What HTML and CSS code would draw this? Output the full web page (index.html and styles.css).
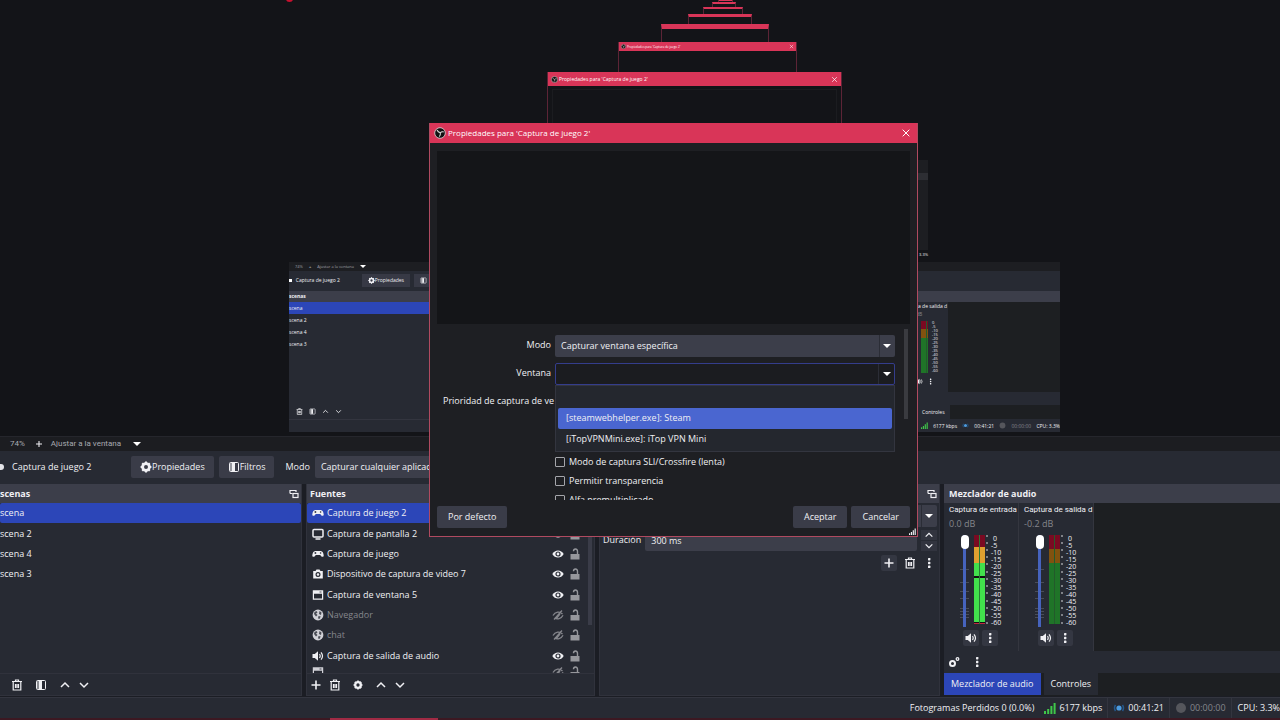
FILE: index.html
```html
<!DOCTYPE html>
<html lang="es">
<head>
  <meta charset="UTF-8" />
  <meta name="viewport" content="width=device-width, initial-scale=1.0" />
  <title>OBS Studio</title>
  <link rel="stylesheet" href="styles.css">
</head>
<body>

  <svg class="sprite" aria-hidden="true">
    <symbol id="i-trash" viewBox="0 0 12 12"><path d="M1 2.500h10M4.500 2V1h3v1M2.200 3v8h7.600V3M4.500 5v4M6 5v4M7.500 5v4" fill="none" stroke="currentColor" stroke-width="1.200"/></symbol>
    <symbol id="i-plus" viewBox="0 0 12 12"><path d="M6 1.500v9M1.500 6h9" stroke="currentColor" stroke-width="1.600"/></symbol>
    <symbol id="i-filter" viewBox="0 0 12 12"><rect x="1.500" y="1.500" width="9" height="9" rx="1" fill="none" stroke="currentColor"/><path d="M2 2h3v8H2z" fill="currentColor" opacity=".5"/><path d="M4 2h3v8H4z" fill="currentColor"/></symbol>
    <symbol id="i-up" viewBox="0 0 12 12"><path d="M2 8l4-4 4 4" fill="none" stroke="currentColor" stroke-width="1.500"/></symbol>
    <symbol id="i-down" viewBox="0 0 12 12"><path d="M2 4l4 4 4-4" fill="none" stroke="currentColor" stroke-width="1.500"/></symbol>
    <symbol id="i-gear" viewBox="0 0 12 12"><circle cx="6" cy="6" r="3.400" fill="none" stroke="currentColor" stroke-width="2.800"/><path d="M6 .6v10.800M.6 6h10.800M2.200 2.200l7.600 7.600M9.800 2.200L2.200 9.800" stroke="currentColor" stroke-width="2" stroke-dasharray="2 6.800"/></symbol>
    <symbol id="i-gears" viewBox="0 0 12 12"><circle cx="4.500" cy="7.500" r="2.500" fill="none" stroke="currentColor" stroke-width="2"/><circle cx="9.500" cy="3" r="1.300" fill="none" stroke="currentColor" stroke-width="1.300"/></symbol>
    <symbol id="i-dots" viewBox="0 0 12 12"><g fill="currentColor"><rect x="5" y="1" width="2.400" height="2.400" rx=".6"/><rect x="5" y="4.800" width="2.400" height="2.400" rx=".6"/><rect x="5" y="8.600" width="2.400" height="2.400" rx=".6"/></g></symbol>
    <symbol id="i-float" viewBox="0 0 12 12"><path d="M2 5.500V2.500h6V4" fill="none" stroke="currentColor" stroke-width="1.200"/><path d="M2 5.500h2.500" stroke="currentColor"/><rect x="5" y="5.500" width="5" height="4" fill="none" stroke="currentColor" stroke-width="1.200"/></symbol>
    <symbol id="i-pad" viewBox="0 0 12 12"><path d="M3.200 3h5.600c1.700 0 2.700 2.200 2.900 4.400.1 1.600-1.600 1.900-2.500.8L8.200 7H3.800l-1 1.200C1.900 9.300.2 9 .3 7.400.500 5.200 1.500 3 3.200 3z" fill="currentColor"/><path d="M3.400 4v2M2.400 5h2" stroke="#272a33" stroke-width=".8"/><circle cx="8.600" cy="5" r=".8" fill="#272a33"/></symbol>
    <symbol id="i-screen" viewBox="0 0 12 12"><rect x="1" y="1.500" width="10" height="7.500" rx="1" fill="none" stroke="currentColor" stroke-width="1.500"/><path d="M3.500 11h5" stroke="currentColor" stroke-width="1.500"/></symbol>
    <symbol id="i-camera" viewBox="0 0 12 12"><path d="M1.200 3h2.300l1-1.500h3L8.500 3h2.300v7.500H1.200z" fill="currentColor"/><circle cx="6" cy="6.500" r="1.900" fill="none" stroke="#272a33" stroke-width="1.200"/></symbol>
    <symbol id="i-window" viewBox="0 0 12 12"><path d="M.8 1.200h10.400v9.600H.8zM2 4.800v4.800h8V4.800z" fill="currentColor" fill-rule="evenodd"/><path d="M7.500 3h2" stroke="#272a33" stroke-width=".8"/></symbol>
    <symbol id="i-globe" viewBox="0 0 12 12"><circle cx="6" cy="6" r="5.400" fill="currentColor"/><path d="M2.500 3l2-1 1 1.500-1.500 1L5.500 6 4 7.500 2 5zM7.500 2l2 1.500L9 6 7 5zM6 7.500L8.500 7 8 9.500 6.500 10z" fill="#272a33" opacity=".8"/></symbol>
    <symbol id="i-sound" viewBox="0 0 12 12"><path d="M.5 4h2.300L6 1.200v9.600L2.800 8H.5z" fill="currentColor"/><path d="M7.500 4q1.400 2 0 4M9 2.300q3 3.700 0 7.400" fill="none" stroke="currentColor" stroke-width="1.200"/></symbol>
    <symbol id="i-eye" viewBox="0 0 12 12"><path d="M.3 6C2.800 1.200 9.200 1.200 11.700 6 9.200 10.800 2.800 10.800.3 6z" fill="currentColor"/><circle cx="6" cy="6" r="2" fill="none" stroke="#272a33" stroke-width="1.200"/></symbol>
    <symbol id="i-hidden" viewBox="0 0 12 12"><path d="M1 6.500C3 2.700 8 2 10.500 5.200M2.500 9c3 1.800 6.500 1 8.500-2.800M2 10.500l8-9M4 10l4-5" fill="none" stroke="currentColor" stroke-width="1.300"/></symbol>
    <symbol id="i-lock" viewBox="0 0 12 12"><path d="M1.500 6h9v5.500h-9z" fill="currentColor"/><path d="M8.500 6V3.200c0-3-4-3-4 0" fill="none" stroke="currentColor" stroke-width="1.400"/></symbol>
    <symbol id="i-close" viewBox="0 0 12 12"><path d="M2 2l8 8M10 2l-8 8" stroke="currentColor" stroke-width="1.200"/></symbol>
    <symbol id="i-obs" viewBox="0 0 12 12"><circle cx="6" cy="6" r="5.300" fill="#111" stroke="#ddd" stroke-width=".8"/><path d="M3 3c1 2.200 2.200 2.500 3.300 2.800M9.800 5C8 4.300 7 5 6.300 5.800M5.200 9.600C6.500 8.500 6.500 7 6.300 5.800" fill="none" stroke="#ddd" stroke-width="1.100"/></symbol>
    <symbol id="i-bars" viewBox="0 0 12 12"><path d="M0 9h2v3H0zM3.200 7h2v5h-2zM6.400 4h2v8h-2zM9.600 1h2v11h-2z" fill="currentColor"/></symbol>
    <symbol id="i-live" viewBox="0 0 12 12"><circle cx="6" cy="6" r="2.600" fill="#4b9be0"/><path d="M2.500 3q-2 3 0 6M9.500 3q2 3 0 6" fill="none" stroke="#24588c" stroke-width="1.500"/></symbol>
    <symbol id="i-dot" viewBox="0 0 12 12"><circle cx="6" cy="6" r="5" fill="#55565c"/></symbol>
    <!-- fader marks -->
    <symbol id="i-marks" viewBox="0 0 9 91"><path d="M0 34h9M0 47h9M0 56h9M0 63h9M0 73h9M0 76h9M0 79h9M0 82h9" stroke="#4a4d58"/></symbol>
    <symbol id="i-ticks" viewBox="0 0 3 91"><path d="M0 1h2M0 8h2M0 15h2M0 22h2M0 29h2M0 37h2M0 44h2M0 51h2M0 58h2M0 66h2M0 73h2M0 80h2M0 88h2" stroke="#d8d8dc"/></symbol>
  </svg>

  <main class="preview">
    <span class="rec-dot"></span>

    <div class="ghost g7"></div>
    <div class="ghost g6"></div>
    <div class="ghost g5"></div>
    <div class="ghost g4"></div>
    <div class="ghost g3"></div>
    <div class="ghost g2"><div class="ghost-bar"><svg><use href="#i-obs"/></svg><span>Propiedades para 'Captura de juego 2'</span><svg><use href="#i-close"/></svg></div></div>
    <div class="ghost g1"><div class="ghost-bar"><svg><use href="#i-obs"/></svg><span>Propiedades para 'Captura de juego 2'</span><svg><use href="#i-close"/></svg></div><div class="ghost-view"></div></div>
    <div class="sliver"><i></i><span>3.3%</span></div>

    <div class="mirror">
      <div class="mirror-left">
        <div class="m-zoom"><span>74%</span><b>+</b><span>Ajustar a la ventana</span><i class="caret"></i></div>
        <div class="m-context"><i class="m-cut"></i><span>Captura de juego 2</span><span class="m-btn"><svg><use href="#i-gear"/></svg>Propiedades</span><span class="m-btn"><svg><use href="#i-filter"/></svg></span></div>
        <div class="m-head">scenas</div>
        <div class="m-row active">scena</div>
        <div class="m-row">scena 2</div>
        <div class="m-row">scena 4</div>
        <div class="m-row">scena 3</div>
        <div class="m-tools"><svg><use href="#i-trash"/></svg><svg><use href="#i-filter"/></svg><svg><use href="#i-up"/></svg><svg><use href="#i-down"/></svg></div>
        <div class="m-status"></div>
      </div>
      <div class="mirror-right">
        <div class="m-zoom"></div>
        <div class="m-context"></div>
        <div class="m-head"></div>
        <div class="m-mixer">
          <div class="m-channel">
            <span>ra de salida d</span>
            <em>dB</em>
            <div class="m-levels"><div class="meter dim"></div><div class="m-scale"><span>0</span><span>-5</span><span>-10</span><span>-15</span><span>-20</span><span>-25</span><span>-30</span><span>-35</span><span>-40</span><span>-45</span><span>-50</span><span>-55</span><span>-60</span></div></div>
            <div class="m-icons"><svg><use href="#i-sound"/></svg><svg><use href="#i-dots"/></svg></div>
          </div>
        </div>
        <div class="m-gap"></div>
        <div class="m-tabs"><span>Controles</span></div>
        <div class="m-status"><svg class="green"><use href="#i-bars"/></svg><span>6177 kbps</span><svg><use href="#i-live"/></svg><span>00:41:21</span><svg><use href="#i-dot"/></svg><span class="off">00:00:00</span><span>CPU: 3.3%</span></div>
      </div>
    </div>
  </main>

  <div class="zoombar">
    <span>74%</span>
    <button class="icon-btn" aria-label="Acercar"><svg class="icon"><use href="#i-plus"/></svg></button>
    <button class="zoom-mode">Ajustar a la ventana <i class="caret"></i></button>
  </div>

  <div class="context">
    <i class="cut-icon"></i>
    <span class="context-name">Captura de juego 2</span>
    <button class="btn"><svg class="icon"><use href="#i-gear"/></svg>Propiedades</button>
    <button class="btn"><svg class="icon"><use href="#i-filter"/></svg>Filtros</button>
    <label for="capMode">Modo</label>
    <select id="capMode" class="field"><option>Capturar cualquier aplicación en pantalla completa</option></select>
  </div>

  <div class="docks">
    <section class="dock scenes-dock">
      <h2>scenas <svg class="icon"><use href="#i-float"/></svg></h2>
      <ul class="list">
        <li class="active">scena</li>
        <li>scena 2</li>
        <li>scena 4</li>
        <li>scena 3</li>
      </ul>
      <div class="tools">
        <button class="icon-btn" aria-label="Eliminar escena"><svg class="icon"><use href="#i-trash"/></svg></button>
        <button class="icon-btn spaced" aria-label="Filtros de escena"><svg class="icon"><use href="#i-filter"/></svg></button>
        <button class="icon-btn" aria-label="Subir escena"><svg class="icon"><use href="#i-up"/></svg></button>
        <button class="icon-btn" aria-label="Bajar escena"><svg class="icon"><use href="#i-down"/></svg></button>
      </div>
    </section>

    <section class="dock">
      <h2>Fuentes</h2>
      <ul class="list sources">
        <li class="active"><svg class="icon"><use href="#i-pad"/></svg><span>Captura de juego 2</span><svg class="icon"><use href="#i-eye"/></svg><svg class="icon lock"><use href="#i-lock"/></svg></li>
        <li><svg class="icon"><use href="#i-screen"/></svg><span>Captura de pantalla 2</span><svg class="icon"><use href="#i-eye"/></svg><svg class="icon lock"><use href="#i-lock"/></svg></li>
        <li><svg class="icon"><use href="#i-pad"/></svg><span>Captura de juego</span><svg class="icon"><use href="#i-eye"/></svg><svg class="icon lock"><use href="#i-lock"/></svg></li>
        <li><svg class="icon"><use href="#i-camera"/></svg><span>Dispositivo de captura de video 7</span><svg class="icon"><use href="#i-eye"/></svg><svg class="icon lock"><use href="#i-lock"/></svg></li>
        <li><svg class="icon"><use href="#i-window"/></svg><span>Captura de ventana 5</span><svg class="icon"><use href="#i-eye"/></svg><svg class="icon lock"><use href="#i-lock"/></svg></li>
        <li class="off"><svg class="icon"><use href="#i-globe"/></svg><span>Navegador</span><svg class="icon dimmed"><use href="#i-hidden"/></svg><svg class="icon lock"><use href="#i-lock"/></svg></li>
        <li class="off"><svg class="icon"><use href="#i-globe"/></svg><span>chat</span><svg class="icon dimmed"><use href="#i-hidden"/></svg><svg class="icon lock"><use href="#i-lock"/></svg></li>
        <li><svg class="icon"><use href="#i-sound"/></svg><span>Captura de salida de audio</span><svg class="icon"><use href="#i-eye"/></svg><svg class="icon lock"><use href="#i-lock"/></svg></li>
        <li class="off"><svg class="icon"><use href="#i-window"/></svg><span></span><svg class="icon dimmed"><use href="#i-hidden"/></svg><svg class="icon lock"><use href="#i-lock"/></svg></li>
      </ul>
      <div class="tools">
        <button class="icon-btn" aria-label="Agregar fuente"><svg class="icon"><use href="#i-plus"/></svg></button>
        <button class="icon-btn" aria-label="Eliminar fuente"><svg class="icon"><use href="#i-trash"/></svg></button>
        <button class="icon-btn spaced" aria-label="Propiedades de fuente"><svg class="icon small"><use href="#i-gear"/></svg></button>
        <button class="icon-btn" aria-label="Subir fuente"><svg class="icon"><use href="#i-up"/></svg></button>
        <button class="icon-btn" aria-label="Bajar fuente"><svg class="icon"><use href="#i-down"/></svg></button>
      </div>
    </section>

    <section class="dock">
      <h2><span></span><svg class="icon"><use href="#i-float"/></svg></h2>
      <div class="transitions">
        <div class="combo"><select class="field" aria-label="Transición"><option></option></select><i class="caret"></i></div>
        <div class="duration">
          <label for="duration">Duración</label>
          <input id="duration" class="field" type="text" value="300 ms">
          <div class="spin">
            <button class="icon-btn" aria-label="Más"><svg class="icon small"><use href="#i-up"/></svg></button>
            <button class="icon-btn" aria-label="Menos"><svg class="icon small"><use href="#i-down"/></svg></button>
          </div>
        </div>
        <div class="transition-tools">
          <button class="icon-btn raised" aria-label="Agregar transición"><svg class="icon"><use href="#i-plus"/></svg></button>
          <button class="icon-btn" aria-label="Eliminar transición"><svg class="icon"><use href="#i-trash"/></svg></button>
          <button class="icon-btn" aria-label="Opciones de transición"><svg class="icon"><use href="#i-dots"/></svg></button>
        </div>
      </div>
    </section>

    <section class="dock mixer">
      <h2>Mezclador de audio</h2>
      <div class="channels">
        <div class="channel">
          <label for="vol1">Captura de entrada</label>
          <output>0.0 dB</output>
          <div class="levels">
            <div class="fader"><svg><use href="#i-marks"/></svg><input id="vol1" type="range" value="100"></div>
            <div class="meter live"></div>
            <svg class="ticks"><use href="#i-ticks"/></svg>
            <div class="scale"><span>0</span><span>-5</span><span>-10</span><span>-15</span><span>-20</span><span>-25</span><span>-30</span><span>-35</span><span>-40</span><span>-45</span><span>-50</span><span>-55</span><span>-60</span></div>
          </div>
          <div class="channel-btns">
            <button class="icon-btn raised" aria-label="Silenciar"><svg class="icon"><use href="#i-sound"/></svg></button>
            <button class="icon-btn raised" aria-label="Opciones"><svg class="icon"><use href="#i-dots"/></svg></button>
          </div>
        </div>
        <div class="channel">
          <label for="vol2">Captura de salida d</label>
          <output>-0.2 dB</output>
          <div class="levels">
            <div class="fader"><svg><use href="#i-marks"/></svg><input id="vol2" type="range" value="100"></div>
            <div class="meter dim"></div>
            <svg class="ticks"><use href="#i-ticks"/></svg>
            <div class="scale"><span>0</span><span>-5</span><span>-10</span><span>-15</span><span>-20</span><span>-25</span><span>-30</span><span>-35</span><span>-40</span><span>-45</span><span>-50</span><span>-55</span><span>-60</span></div>
          </div>
          <div class="channel-btns">
            <button class="icon-btn raised" aria-label="Silenciar"><svg class="icon"><use href="#i-sound"/></svg></button>
            <button class="icon-btn raised" aria-label="Opciones"><svg class="icon"><use href="#i-dots"/></svg></button>
          </div>
        </div>
      </div>
      <div class="mixer-tools">
        <button class="icon-btn" aria-label="Propiedades avanzadas de audio"><svg class="icon"><use href="#i-gears"/></svg></button>
        <button class="icon-btn" aria-label="Menú del mezclador"><svg class="icon"><use href="#i-dots"/></svg></button>
      </div>
      <div class="tabs">
        <button class="tab active">Mezclador de audio</button>
        <button class="tab">Controles</button>
      </div>
    </section>
  </div>

  <footer class="status">
    <span class="cell">Fotogramas Perdidos 0 (0.0%)</span>
    <span class="cell"><svg class="icon green"><use href="#i-bars"/></svg>6177 kbps</span>
    <span class="cell line"><svg class="icon"><use href="#i-live"/></svg>00:41:21</span>
    <span class="cell line off"><svg class="icon"><use href="#i-dot"/></svg>00:00:00</span>
    <span class="cell line cpu">CPU: 3.3%</span>
  </footer>
  <div class="progress"><span></span></div>

  <div class="dialog" role="dialog" aria-labelledby="dialogTitle">
    <div class="titlebar">
      <svg class="icon"><use href="#i-obs"/></svg>
      <span id="dialogTitle">Propiedades para 'Captura de juego 2'</span>
      <button class="icon-btn" aria-label="Cerrar"><svg class="icon small"><use href="#i-close"/></svg></button>
    </div>
    <div class="dialog-body">
      <div class="dialog-view"></div>
      <div class="form">
        <div class="form-rows">
          <label for="mode">Modo</label>
          <div class="combo"><select id="mode" class="field"><option>Capturar ventana específica</option></select><i class="caret"></i></div>
          <label for="win">Ventana</label>
          <div class="combo open">
            <select id="win" class="field"><option></option></select><i class="caret"></i>
            <ul class="popup" role="listbox">
              <li role="option"></li>
              <li role="option" class="active">[steamwebhelper.exe]: Steam</li>
              <li role="option">[iTopVPNMini.exe]: iTop VPN Mini</li>
            </ul>
          </div>
          <label for="prio">Prioridad de captura de ve</label>
          <div class="combo"><select id="prio" class="field"><option></option></select><i class="caret"></i></div>
          <div class="checks">
            <label><input type="checkbox">Modo de captura SLI/Crossfire (lenta)</label>
            <label><input type="checkbox">Permitir transparencia</label>
            <label><input type="checkbox">Alfa premultiplicado</label>
          </div>
        </div>
        <div class="scroll"></div>
      </div>
      <div class="dialog-foot">
        <button class="btn">Por defecto</button>
        <button class="btn">Aceptar</button>
        <button class="btn">Cancelar</button>
      </div>
    </div>
    <svg class="grip"><use href="#i-bars"/></svg>
    <svg class="cursor" viewBox="0 0 10 14"><path d="M1 1v10l2.500-2 1.500 3.500 2-1L5.500 8H9z" fill="#fff" stroke="#333" stroke-width=".6"/></svg>
  </div>

</body>
</html>
```
FILE: styles.css
```css
* {
  box-sizing: border-box;
}

html, body {
  height: 100%;
  margin: 0;
}

body {
  display: flex;
  flex-direction: column;
  position: relative;
  overflow: hidden;
  font-family: "Open Sans", "Noto Sans", sans-serif;
  font-size: 9px;
  line-height: 14px;
  color: #f0f0f4;
  background-color: #1b1d24;
}

button, input, select {
  font: inherit;
  color: inherit;
}

button {
  border: none;
  padding: 0;
  background: none;
}

ul {
  list-style: none;
  margin: 0;
  padding: 0;
}

.sprite {
  display: none;
}

.icon {
  width: 12px;
  height: 12px;
  flex-shrink: 0;
  display: block;
}

.icon.small {
  width: 10px;
  height: 10px;
}

.icon-btn {
  display: flex;
  align-items: center;
  justify-content: center;
}

.raised {
  width: 16px;
  height: 16px;
  border-radius: 2px;
  background-color: #343742;
}

.green {
  color: #3fc84a;
}

.off {
  color: #85868c;
}

.caret {
  width: 0;
  height: 0;
  border: 4px solid transparent;
  border-top-color: #fff;
  border-bottom: none;
}

.btn {
  display: flex;
  align-items: center;
  justify-content: center;
  height: 22px;
  border-radius: 2px;
  background-color: #3a3c48;
}

.field {
  appearance: none;
  height: 22px;
  border: none;
  border-radius: 2px;
  padding: 0 6px;
  background-color: #3c3e4a;
}

/* preview */
.preview {
  flex: 1;
  min-height: 0;
  position: relative;
  overflow: hidden;
  background-color: #131418;
  border-bottom: 1px solid #25262c;
}

.rec-dot {
  position: absolute;
  left: 286px;
  top: -4px;
  width: 7px;
  height: 6px;
  border-radius: 50%;
  background-color: #c8102e;
}

/* repeated windows inside the capture */
.ghost {
  position: absolute;
  border: 1px solid #5c2436;
  border-top: 3px solid #d93558;
  background-color: #131418;
}

.g7 { left: 718px; top: -2px; width: 15px; height: 6px; }
.g6 { left: 712px; top: 2px; width: 24px; height: 8px; border-top-width: 2px; }
.g5 { left: 703px; top: 7px; width: 40px; height: 8px; border-top-width: 2px; }
.g4 { left: 688px; top: 14px; width: 64px; height: 12px; }
.g3 { left: 661px; top: 24px; width: 108px; height: 20px; border-top-width: 5px; }

.g2 { left: 618px; top: 42px; width: 179px; height: 32px; border-top: none; font-size: 3px; }
.g1 { left: 547px; top: 72px; width: 295px; height: 60px; border-top: none; font-size: 5px; }

.ghost-bar {
  display: flex;
  align-items: center;
  gap: 1px;
  height: 9px;
  padding: 0 2px;
  line-height: 8px;
  color: #fff;
  background-color: #d93558;
}

.ghost-bar span {
  flex: 1;
}

.ghost-bar svg {
  width: 5px;
  height: 5px;
}

.g1 .ghost-bar {
  height: 14px;
  padding: 0 3px;
}

.g1 .ghost-bar svg {
  width: 7px;
  height: 7px;
}

.ghost-view {
  height: 60px;
  margin: 3px 4px;
  border: 1px solid #1b1c20;
}

.sliver {
  position: absolute;
  left: 900px;
  top: 160px;
  width: 28px;
  height: 100px;
  padding-top: 13px;
  background: linear-gradient(#1d1e22 90px, transparent 90px);
  font-size: 4px;
  line-height: 6px;
  text-align: right;
}

.sliver i {
  display: block;
  height: 7px;
  margin-bottom: 72px;
  background-color: #2d2e33;
}

.mirror {
  position: absolute;
  left: 289px;
  top: 262px;
  width: 771px;
  height: 170px;
  display: flex;
  justify-content: space-between;
  background-color: #272a33;
  font-size: 5px;
  line-height: 8px;
}

.mirror svg {
  width: 7px;
  height: 7px;
}

.mirror-left, .mirror-right {
  display: flex;
  flex-direction: column;
  width: 144px;
  overflow: hidden;
}

.m-zoom {
  display: flex;
  align-items: center;
  gap: 6px;
  height: 9px;
  padding-left: 6px;
  font-size: 4px;
  color: #a0a1a8;
  background-color: #1d1e22;
}

.m-zoom .caret {
  border-width: 3px;
  border-bottom: none;
}

.m-context {
  display: flex;
  align-items: center;
  gap: 4px;
  height: 20px;
  padding-bottom: 2px;
  white-space: nowrap;
}

.m-cut {
  width: 3px;
  height: 3px;
  background-color: #fff;
}

.m-context > span:nth-child(2) {
  width: 68px;
}

.m-btn {
  display: flex;
  align-items: center;
  height: 13px;
  padding: 0 6px;
  background-color: #373945;
}

.m-head {
  height: 11px;
  font-weight: bold;
  line-height: 11px;
  background-color: #3c3e4a;
}

.m-row {
  height: 12px;
  line-height: 12px;
}

.m-row.active {
  background-color: #2c46b8;
}

.m-tools {
  display: flex;
  align-items: center;
  gap: 6px;
  flex: 1;
  padding: 54px 0 0 7px;
}

.mirror-left .m-status {
  border-top: 1px solid #33353f;
}

.m-mixer {
  flex: 1;
  padding-right: 112px;
  background: linear-gradient(90deg, #272a33 32px, #1d1f22 32px);
}

.m-channel {
  display: flex;
  flex-direction: column;
  white-space: nowrap;
}

.m-channel em {
  font-style: normal;
  color: #85868c;
}

.m-levels {
  display: flex;
  gap: 4px;
  padding: 3px 0 5px 5px;
}

.m-scale {
  display: flex;
  flex-direction: column;
  font-size: 4px;
  line-height: 4px;
}

.m-icons {
  display: flex;
  gap: 4px;
}

.m-gap {
  height: 13px;
}

.m-tabs {
  height: 14px;
  line-height: 14px;
  background: linear-gradient(90deg, #272a33 34px, #1d1f22 34px);
}

.m-tabs span {
  padding-left: 6px;
}

.m-status {
  display: flex;
  align-items: center;
  justify-content: space-between;
  gap: 1px;
  height: 13px;
  padding-left: 5px;
  white-space: nowrap;
}

/* toolbars */
.zoombar {
  display: flex;
  align-items: center;
  height: 14px;
  padding-left: 10px;
  gap: 8px;
  font-family: Roboto, "Open Sans", sans-serif;
  font-size: 8px;
  color: #a8a9b0;
  background-color: #1c1d21;
}

.zoombar .icon {
  width: 8px;
  height: 8px;
  margin: 0 0 0 2px;
  color: #f0f0f4;
}

.zoom-mode {
  display: flex;
  align-items: center;
  gap: 12px;
}

.context {
  display: flex;
  align-items: center;
  height: 33px;
  padding-bottom: 2px;
  background-color: #272a33;
}

.cut-icon {
  width: 4px;
  height: 6px;
  margin-right: 8px;
  border-radius: 0 3px 3px 0;
  background-color: #e4e4e8;
}

.context-name {
  width: 119px;
}

.context .btn {
  padding: 0 9px;
  margin-right: 5px;
}

.context label {
  margin: 0 5px 0 6px;
}

/* docks */
.docks {
  display: grid;
  grid-template-columns: 302px 289px 341px 1fr;
  gap: 4px;
  height: 213px;
  overflow: hidden;
}

.dock {
  display: flex;
  flex-direction: column;
  min-width: 0;
  background-color: #272a33;
  border: 1px solid #30323c;
  border-top: none;
  margin-bottom: 1px;
}

.dock h2 {
  display: flex;
  align-items: center;
  justify-content: space-between;
  height: 19px;
  margin: 0;
  padding: 0 1px 0 3px;
  font-size: 9px;
  font-weight: bold;
  background-color: #3c3e4a;
}

.list {
  display: grid;
  grid-template-rows: repeat(8, 1fr) 7px;
  flex: 1;
  min-height: 0;
  overflow: hidden;
}

.list li {
  display: flex;
  align-items: center;
  min-height: 0;
  overflow: hidden;
}

.list .active {
  border-radius: 2px;
  background-color: #2c46b8;
}

.sources {
  padding-right: 12px;
  background: linear-gradient(#3a3c48, #3a3c48) no-repeat right 2px top 0 / 4px 122px;
}

.sources li {
  padding: 0 1px 0 5px;
  gap: 3px;
}

.sources li:last-child {
  align-items: flex-start;
}

.sources span {
  flex: 1;
}

.sources .off span {
  color: #85868c;
}

.sources .off {
  color: #d0d0d6;
}

.list .dimmed {
  color: #85868c;
}

.list .lock {
  margin-left: 2px;
  color: #96979c;
}

.tools {
  display: flex;
  align-items: center;
  gap: 7px;
  height: 22px;
  padding-left: 3px;
  border-top: 1px solid #30323c;
}

.tools .spaced {
  margin: 0 5px;
}

.scenes-dock {
  border-left: none;
}

.scenes-dock h2 {
  padding-left: 0;
}

.scenes-dock .tools {
  padding-left: 11px;
}

.transitions {
  padding: 2px 2px 2px 3px;
}

.combo {
  position: relative;
  display: grid;
}

.combo .field {
  background-image: linear-gradient(#2b2d36, #2b2d36);
  background-repeat: no-repeat;
  background-position: right 15px top 0;
  background-size: 1px 100%;
}

/* arrow over the select box */
.combo > .caret {
  position: absolute;
  right: 4px;
  top: 9px;
  pointer-events: none;
}

.duration {
  display: flex;
  align-items: center;
  gap: 4px;
  margin: 2px 0;
}

.duration input {
  flex: 1;
  min-width: 0;
}

.spin {
  display: flex;
  flex-direction: column;
  gap: 1px;
}

.spin .icon-btn {
  width: 16px;
  background-color: #32343f;
}

.transition-tools {
  display: flex;
  justify-content: flex-end;
  align-items: center;
  gap: 7px;
  padding: 2px 2px 0 0;
}

/* mixer */
.mixer {
  background-color: #1d1f22;
  border: none;
}

.mixer h2 {
  padding-left: 5px;
}

.channels {
  display: flex;
  flex: 1;
}

.channel {
  width: 75px;
  padding: 0 2px 0 5px;
  border-right: 1px solid #34363f;
  background-color: #272a33;
}

.channel label, .channel output {
  display: block;
  white-space: nowrap;
}

.channel label {
  font-family: Roboto, "Open Sans", sans-serif;
  font-size: 8px;
}

.channel output {
  color: #85868c;
}

.levels {
  display: flex;
  padding: 4px 0 0 11px;
  height: 99px;
}

.fader {
  display: grid;
  width: 9px;
  height: 92px;
}

.fader svg, .fader input {
  grid-area: 1 / 1;
  width: 9px;
  height: 92px;
  margin: 0;
}

.fader input {
  appearance: none;
  writing-mode: vertical-lr;
  direction: rtl;
  background: linear-gradient(90deg, transparent 3px, #4663bd 3px, #4663bd 6px, transparent 6px);
}

.fader input::-webkit-slider-thumb {
  appearance: none;
  width: 8px;
  height: 14px;
  border-radius: 4px;
  background-color: #fff;
}

.meter {
  width: 11px;
  height: 89px;
  margin: 0 1px 0 5px;
}

.meter.live {
  background:
    linear-gradient(90deg, transparent 5px, #2a7a35 5px, #2a7a35 6px, transparent 6px),
    linear-gradient(#7a0a22 12px, #e0a030 12px, #e0a030 28px, #42e04c 28px, #42e04c 41px, #111 41px, #111 43px, #42e04c 43px, #42e04c 87px, #111 87px, #111 88px, #c02840 88px);
}

.meter.dim {
  background:
    linear-gradient(90deg, transparent 5px, #235a2b 5px, #235a2b 6px, transparent 6px),
    linear-gradient(#7a0a22 16%, #81520f 16%, #81520f 32%, #1f7428 32%);
}

.m-levels .meter {
  width: 7px;
  height: 52px;
  margin: 0;
}

.ticks {
  width: 3px;
  height: 91px;
}

.scale {
  display: flex;
  flex-direction: column;
  padding-left: 2px;
  font-size: 7px;
  line-height: 7px;
}

.scale span:first-child {
  padding-left: 2px;
}

.channel-btns {
  display: flex;
  gap: 3px;
  padding: 0 0 0 14px;
}

.mixer-tools {
  display: flex;
  align-items: center;
  gap: 11px;
  height: 22px;
  padding-left: 4px;
  background-color: #272a33;
}

.tabs {
  display: flex;
  gap: 3px;
  padding-bottom: 1px;
}

.tab {
  height: 22px;
  padding: 0 7px;
  background-color: #272a33;
}

.tab.active {
  background-color: #2c46b8;
}

/* status bar */
.status {
  display: flex;
  justify-content: flex-end;
  height: 21px;
  border-top: 1px solid #33353f;
  background-color: #272a33;
  white-space: nowrap;
}

.cell {
  display: flex;
  align-items: center;
  gap: 3px;
  padding: 0 5px;
}

.cell.line {
  border-left: 1px solid #33353f;
}

.cell.cpu {
  padding: 0 0 0 6px;
}

.progress {
  height: 2px;
  background-color: #3c1822;
}

.progress span {
  display: block;
  width: 108px;
  height: 2px;
  margin-left: 330px;
  background-color: #a02a44;
}

/* properties dialog */
.dialog {
  position: absolute;
  left: 429px;
  top: 123px;
  width: 489px;
  height: 414px;
  display: flex;
  flex-direction: column;
  border: 1px solid #b04a60;
  border-top: none;
  background-color: #1e1f23;
}

.titlebar {
  display: flex;
  align-items: center;
  gap: 2px;
  height: 20px;
  padding: 0 6px 0 4px;
  font-size: 8px;
  color: #fff;
  background-color: #d93558;
}

.titlebar span {
  flex: 1;
}

.dialog-body {
  flex: 1;
  display: flex;
  flex-direction: column;
  min-height: 0;
  padding: 8px 7px;
}

.dialog-view {
  flex: 1;
  background-color: #141518;
}

.form {
  display: flex;
  justify-content: space-between;
  height: 171px;
  margin: 5px 0 6px;
  padding: 0 2px 0 6px;
  overflow: hidden;
}

.form-rows {
  flex: 1;
  display: grid;
  grid-template-columns: 108px 1fr;
  grid-auto-rows: 22px;
  gap: 6px 4px;
  align-items: center;
  padding: 6px 9px 0 0;
}

.form-rows > label {
  padding-bottom: 2px;
  text-align: right;
  white-space: nowrap;
}

.open .field {
  border: 1px solid #343d8c;
  background-color: #1b1c20;
}

/* drop-down list over the form */
.popup {
  position: absolute;
  top: 22px;
  left: 0;
  right: 0;
  z-index: 1;
  padding: 1px 2px;
  border: 1px solid #33353f;
  background-color: #24272e;
}

.popup li {
  height: 21px;
  padding-left: 8px;
  line-height: 20px;
}

.popup .active {
  border-radius: 2px;
  background-color: #4a66d0;
}

.checks {
  grid-column: 2;
  align-self: start;
  padding-top: 33px;
}

.checks label {
  display: flex;
  align-items: center;
  gap: 4px;
  height: 19px;
}

.checks input {
  appearance: none;
  width: 10px;
  height: 10px;
  margin: 0;
  border: 1px solid #a4a5aa;
  border-radius: 1px;
}

.scroll {
  width: 4px;
  height: 90px;
  background-color: #3a3b40;
}

.dialog-foot {
  display: flex;
  gap: 4px;
}

.dialog-foot .btn {
  padding: 0 11px;
}

.dialog-foot .btn:first-child {
  margin-right: auto;
}

.grip {
  position: absolute;
  right: 1px;
  bottom: 1px;
  width: 7px;
  height: 7px;
}

.cursor {
  position: absolute;
  left: 343px;
  top: 289px;
  width: 8px;
  height: 12px;
}
```
